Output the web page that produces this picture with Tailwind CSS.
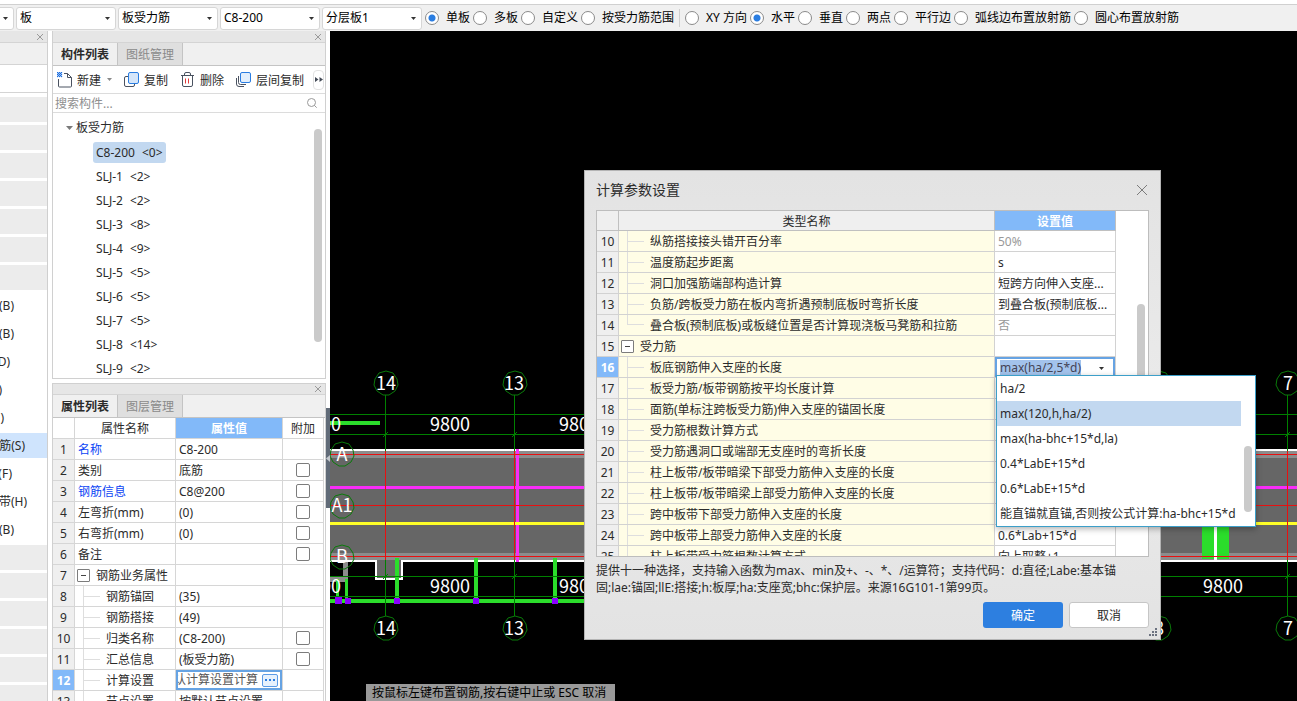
<!DOCTYPE html>
<html lang="zh-CN">
<head>
<meta charset="utf-8">
<title>计算参数设置</title>
<script src="https://cdn.jsdelivr.net/npm/@tailwindcss/browser@4"></script>
</head>
<body class="flex h-screen flex-col overflow-hidden bg-white font-['Noto_Sans','Noto_Sans_CJK_SC',sans-serif] text-xs leading-4 text-[#2b2b2b]">

<!-- Top toolbar -->
<header class="mt-1 flex h-[27px] shrink-0 items-center border-t border-[#d0d0d0] bg-[#f0f0f0]">
  <div id="combos" class="flex h-[23px] gap-[2px] -ml-[86px]"></div>
  <div class="ml-[3px] flex items-center text-black">
    <div id="scope" role="radiogroup" aria-label="布置范围" class="flex gap-[3px]"></div>
    <span class="mx-[5px] h-[18px] w-px bg-[#cfcfcf]"></span>
    <div id="direction" role="radiogroup" aria-label="布置方向" class="flex gap-[3px]"></div>
  </div>
</header>

<div class="flex min-h-0 flex-1">
  <!-- Navigation strip -->
  <nav class="flex w-12 shrink-0 flex-col overflow-hidden border-r border-[#cfcfcf]">
    <div class="flex h-3 shrink-0 items-center justify-end border-b border-[#d4d4d4] bg-[#e6e6e6] pr-[3px]">
      <button aria-label="关闭导航"><svg class="size-2" viewBox="0 0 8 8" fill="none" stroke="#9a9a9a"><path d="M1 1l6 6M7 1l-6 6"/></svg></button>
    </div>
    <div class="h-[22px] shrink-0 border-b border-[#d4d4d4] bg-[#f0f0f0]"></div>
    <div class="h-7 shrink-0 border-b border-[#d4d4d4]"></div>
    <div id="nav" class="mt-1 flex flex-col gap-[3px]"></div>
  </nav>

  <!-- Docked panels -->
  <aside class="ml-1 flex w-[274px] shrink-0 flex-col gap-1">
    <section class="flex h-[348px] shrink-0 flex-col border border-t-0 border-[#d0d0d0]">
      <div class="flex h-3 shrink-0 items-center justify-end border-b border-[#d4d4d4] bg-[#e6e6e6] pr-[3px]">
        <button aria-label="关闭"><svg class="size-2" viewBox="0 0 8 8" fill="none" stroke="#9a9a9a"><path d="M1 1l6 6M7 1l-6 6"/></svg></button>
      </div>
      <div class="flex h-[23px] shrink-0 border-b border-[#c4c4c4] bg-[#f0f0f0]">
        <button class="w-[65px] border-r border-[#c4c4c4] pt-[2px] font-bold">构件列表</button>
        <button class="w-[65px] border-r border-[#c4c4c4] bg-[#dfdfdf] pt-[2px] text-[#8a8a8a]">图纸管理</button>
      </div>
      <div class="flex h-7 shrink-0 items-center border-b border-[#dcdcdc] pl-1">
        <button class="flex items-center">
          <svg class="size-4" viewBox="0 0 16 16" fill="none"><path d="M7 1.500h3.500l4 4v8.500a1 1 0 0 1-1 1h-11a1 1 0 0 1-1-1V7M10.500 1.500v4h4" stroke="#4a5260"/><path d="M0 0h1v1H0zM2 0h1v1H2zM4 0h1v1H4zM1 1h1v1H1zM3 1h1v1H3zM0 2h1v1H0zM2 2h1v1H2zM4 2h1v1H4zM1 3h1v1H1zM3 3h1v1H3zM0 4h1v1H0zM2 4h1v1H2zM4 4h1v1H4z" fill="#1f6fe0" stroke="#1f6fe0" stroke-width=".3"/></svg>
          <span class="ml-1 pt-[2px]">新建</span>
          <svg class="ml-[6px] h-[3px] w-[5px]" viewBox="0 0 5 3"><path d="M0 0h5L2.500 3z" fill="#8a8a8a"/></svg>
        </button>
        <button class="ml-3 flex items-center">
          <svg class="size-4" viewBox="0 0 16 16" fill="none"><path d="M4 4.500H2a1.500 1.500 0 0 0-1.500 1.500v7A1.500 1.500 0 0 0 2 14.500h7a1.500 1.500 0 0 0 1.500-1.500v-1" stroke="#4a5260"/><rect x="4.500" y=".5" width="10" height="11" rx="1.500" fill="#d5e6fa" stroke="#2a7de1"/></svg>
          <span class="ml-1 pt-[2px]">复制</span>
        </button>
        <button class="ml-3 flex items-center">
          <svg class="size-4" viewBox="0 0 16 16" fill="none"><path d="M1 3.500h13M4.500 3.500V2a1.500 1.500 0 0 1 1.500-1.500h3A1.500 1.500 0 0 1 10.500 2v1.500M2.500 3.500V13A1.500 1.500 0 0 0 4 14.500h7a1.500 1.500 0 0 0 1.500-1.500V3.500" stroke="#4a5260"/><path d="M5.500 6.500v5M8.500 6.500v5" stroke="#e23b3b"/></svg>
          <span class="ml-1 pt-[2px]">删除</span>
        </button>
        <button class="ml-3 flex items-center">
          <svg class="size-4" viewBox="0 0 16 16" fill="none"><path d="M.5 6v6A2.500 2.500 0 0 0 3 14.500h5M2.500 4v6.500A2 2 0 0 0 4.500 12.500H10" stroke="#4a5260"/><rect x="4.500" y=".5" width="10" height="10" rx="1.500" fill="#e3effc" stroke="#2a7de1"/></svg>
          <span class="ml-1 pt-[2px]">层间复制</span>
        </button>
        <button aria-label="更多" class="ml-[9px] flex h-5 w-[11px] items-center justify-center rounded-sm border border-[#e2e2e2]">
          <svg class="h-[5px] w-2 shrink-0" viewBox="0 0 8 5"><path d="M0 0l3.500 2.500L0 5zM4.500 0L8 2.500 4.500 5z" fill="#444b57"/></svg>
        </button>
      </div>
      <label class="flex h-[19px] shrink-0 items-center border-b border-[#dcdcdc] pr-2 pl-[2px]">
        <input type="text" aria-label="搜索构件" placeholder="搜索构件..." class="min-w-0 flex-1 pt-[2px] outline-none placeholder:text-[#8f8f8f]">
        <svg class="size-[10px]" viewBox="0 0 10 10" fill="none" stroke="#999"><circle cx="4.500" cy="4.500" r="4"/><path d="M7.300 7.300L9.700 9.700"/></svg>
      </label>
      <div class="flex min-h-0 flex-1 justify-between overflow-hidden">
        <div class="pt-[3px] pl-[13px]">
          <div class="flex h-6 items-center gap-[3px]"><svg class="h-1 w-[7px]" viewBox="0 0 7 4"><path d="M0 0h7L3.500 4z" fill="#7a7a7a"/></svg>板受力筋</div>
          <ul id="tree" class="pl-[27px]"></ul>
        </div>
        <div class="mt-4 mr-[3px] h-[213px] w-2 rounded-full bg-[#cacaca]"></div>
      </div>
    </section>

    <section class="flex min-h-0 flex-1 flex-col overflow-hidden border border-b-0 border-[#d0d0d0]">
      <div class="flex h-[11px] shrink-0 items-center justify-end border-b border-[#d4d4d4] bg-[#e6e6e6] pr-[3px]">
        <button aria-label="关闭"><svg class="size-2" viewBox="0 0 8 8" fill="none" stroke="#9a9a9a"><path d="M1 1l6 6M7 1l-6 6"/></svg></button>
      </div>
      <div class="flex h-[23px] shrink-0 border-b border-[#c4c4c4] bg-[#f0f0f0]">
        <button class="w-[65px] border-r border-[#c4c4c4] pt-[2px] font-bold">属性列表</button>
        <button class="w-[65px] border-r border-[#c4c4c4] bg-[#dfdfdf] pt-[2px] text-[#8a8a8a]">图层管理</button>
      </div>
      <table class="w-[271px] shrink-0 table-fixed border-separate border-spacing-0">
        <colgroup><col class="w-[22px]"><col class="w-[101px]"><col class="w-[107px]"><col class="w-[41px]"></colgroup>
        <thead><tr class="h-[21px] leading-4 [&>th]:border-r [&>th]:border-b [&>th]:border-[#d6d6d6] [&>th]:p-0 [&>th]:pt-[2px] [&>th]:font-normal">
          <th></th><th>属性名称</th><th class="bg-[#82b9f9] text-white"><b>属性值</b></th><th>附加</th>
        </tr></thead>
        <tbody id="props"></tbody>
      </table>
    </section>
  </aside>

  <!-- Splitter -->
  <div class="flex w-1 shrink-0 flex-col">
    <button aria-label="折叠面板" class="mt-[377px] flex h-[100px] items-center bg-[#616b78]"><svg class="h-[7px] w-1" viewBox="0 0 4 7"><path d="M4 0v7L0 3.500z" fill="#c4c8ce"/></svg></button>
  </div>

  <!-- Drawing area -->
  <main class="relative min-w-0 flex-1 overflow-hidden bg-black">
    <svg class="absolute top-0 left-0 h-[670px] w-[967px] font-['Noto_Sans_CJK_SC',sans-serif]" viewBox="330 31 967 670" shape-rendering="crispEdges">
      <defs>
        <polygon id="bub" points="0,-12 7,-10 11,-4 12,2 9,8 3,12 -3,12 -9,8 -12,2 -11,-4 -7,-10" fill="none" stroke="#0a7a0a" shape-rendering="auto"/>
      </defs>
      <g fill="#666">
        <rect x="330" y="451" width="967" height="110"/>
        <rect x="376" y="561" width="26" height="17"/>
      </g>
      <g fill="#8c8c8c">
        <rect x="330" y="451" width="967" height="7"/>
        <rect x="330" y="553" width="967" height="7"/>
        <rect x="343" y="561" width="5" height="21"/>
        <rect x="330" y="577" width="14" height="5"/>
      </g>
      <path d="M330 450H1297M330 561H376V579H402V561H1297" fill="none" stroke="#fff" stroke-width="2"/>
      <g fill="#2bdd2b">
        <rect x="330" y="421" width="50" height="4"/>
        <rect x="330" y="599" width="254" height="4"/>
        <rect x="395" y="558" width="4" height="42"/>
        <rect x="474" y="558" width="4" height="42"/>
        <rect x="553" y="558" width="4" height="42"/>
        <rect x="336" y="579" width="3" height="20"/>
        <rect x="345" y="579" width="3" height="20"/>
        <rect x="1202" y="500" width="27" height="59"/>
      </g>
      <rect x="1214" y="500" width="3" height="60" fill="#fff"/>
      <path d="M385.500 395V616M514.500 395V616M1287.500 395V616M330 414.500H1297M330 434.500H1297M330 576.500H1297M330 596.500H1297" stroke="#008000" fill="none"/>
      <path d="M383 437l5-5M512 437l5-5M1285 437l5-5M383 579l5-5M512 579l5-5M1285 579l5-5" stroke="#008000"/>
      <g fill="#f92cf9"><rect x="330" y="486" width="967" height="3"/><rect x="516" y="449" width="3" height="113"/></g>
      <rect x="330" y="522" width="967" height="3" fill="#ffff28"/>
      <path d="M330 454.500H1297M330 505.500H1297M330 556.500H1297M385.500 451V560M514.500 451V560M1287.500 451V560" stroke="#e81010" fill="none"/>
      <g fill="#8b00ff"><rect x="335" y="597" width="7" height="7"/><rect x="345" y="598" width="6" height="6"/><rect x="394" y="598" width="6" height="6"/><rect x="473" y="598" width="6" height="6"/><rect x="552" y="598" width="6" height="6"/></g>
      <use href="#bub" x="386" y="383"/><use href="#bub" x="515" y="383"/><use href="#bub" x="1159" y="383"/><use href="#bub" x="1288" y="383"/>
      <use href="#bub" x="386" y="628"/><use href="#bub" x="515" y="628"/><use href="#bub" x="1159" y="628"/><use href="#bub" x="1288" y="628"/>
      <use href="#bub" x="342" y="454"/><use href="#bub" x="342" y="506"/><use href="#bub" x="342" y="557"/>
      <g fill="#fff" font-size="18" text-anchor="middle">
        <text x="386" y="390">14</text><text x="514" y="390">13</text><text x="1288" y="390">7</text>
        <text x="386" y="635">14</text><text x="514" y="635">13</text><text x="1159" y="635">8</text><text x="1288" y="635">7</text>
        <text x="342" y="461">A</text><text x="342" y="512">A1</text><text x="342" y="563">B</text>
        <text x="321" y="431">9800</text><text x="450" y="431">9800</text><text x="579" y="431">9800</text>
        <text x="321" y="593">9800</text><text x="450" y="593">9800</text><text x="579" y="593">9800</text><text x="1223" y="593">9800</text>
      </g>
    </svg>

    <div class="absolute top-[653px] left-9 bg-[#999] py-px pr-[9px] pl-[6px] whitespace-nowrap text-black">按鼠标左键布置钢筋,按右键中止或 ESC 取消</div>

    <!-- Dialog window -->
    <div role="dialog" aria-labelledby="dlg-title" class="absolute top-[139px] left-[254px] flex h-[470px] w-[577px] flex-col border border-[#b4b4b4] bg-[#e4e4e4] bg-linear-to-b from-[#e3e3e3] via-[#ebebeb] to-[#e3e3e3] px-[11px]">
      <div class="flex h-[39px] shrink-0 items-center justify-between pr-px pb-[2px]">
        <h1 id="dlg-title" class="text-sm leading-5">计算参数设置</h1>
        <button aria-label="关闭对话框"><svg class="size-3" viewBox="0 0 12 12" fill="none" stroke="#7c7c7c"><path d="M1 1l10 10M11 1L1 11"/></svg></button>
      </div>
      <div class="flex h-[347px] shrink-0 justify-between overflow-hidden border border-[#bdbdbd] bg-white">
        <table class="h-fit w-[519px] table-fixed border-separate border-spacing-0">
          <colgroup><col class="w-[22px]"><col class="w-[376px]"><col class="w-[121px]"></colgroup>
          <thead><tr class="h-5 bg-[#efefef] leading-4 [&>th]:border-r [&>th]:border-b [&>th]:border-[#c0c0c0] [&>th]:p-0 [&>th]:pt-[2px] [&>th]:font-normal">
            <th></th><th>类型名称</th><th class="bg-[#82b9f9] text-white"><b>设置值</b></th>
          </tr></thead>
          <tbody id="params"></tbody>
        </table>
        <div class="mt-[93px] mr-[3px] h-[186px] w-2 rounded-full bg-[#cacaca]"></div>
      </div>
      <p class="mt-[5px] leading-[17px]">提供十一种选择，支持输入函数为max、min及+、-、*、/运算符；支持代码：d:直径;Labe:基本锚<br>固;lae:锚固;llE:搭接;h:板厚;ha:支座宽;bhc:保护层。来源16G101-1第99页。</p>
      <div class="mt-[6px] flex justify-end gap-[6px]">
        <button class="h-[26px] w-20 rounded-[3px] bg-[#2d7fe0] pt-[2px] text-white">确定</button>
        <button class="h-[26px] w-20 rounded-[3px] border border-[#c6c6c6] bg-white pt-[2px]">取消</button>
      </div>
      <svg class="absolute right-[3px] bottom-[3px] size-2" viewBox="0 0 8 8" fill="#6c7280"><path d="M6 0h2v2H6zM6 3h2v2H6zM3 3h2v2H3zM6 6h2v2H6zM3 6h2v2H3zM0 6h2v2H0z"/></svg>

      <!-- Open drop-down of row 16 -->
      <div class="absolute top-[204px] left-[411px] flex w-[260px] justify-between border border-[#3c9fc9] bg-white shadow-[0_2px_6px_rgba(0,0,0,0.3)]">
        <ul id="options" role="listbox" aria-label="板底钢筋伸入支座的长度" class="w-[244px]"></ul>
        <div class="mt-[70px] mr-[3px] h-[66px] w-2 rounded-full bg-[#cacaca]"></div>
      </div>
    </div>
  </main>
</div>

<script>
const $ = id => document.getElementById(id);

$('combos').innerHTML = [['', '楼层'], ['板', '构件类别'], ['板受力筋', '构件类型'], ['C8-200', '构件'], ['分层板1', '分层']].map(([t, l]) => `
  <label class="relative flex">
    <select aria-label="${l}" class="w-[100px] appearance-none rounded-[3px] border border-[#d6d6d6] bg-white pl-[3px] text-black"><option>${t}</option></select>
    <svg class="pointer-events-none absolute top-[10px] right-[6px] h-[3px] w-[5px]" viewBox="0 0 5 3"><path d="M0 0h5L2.500 3z" fill="#333"/></svg>
  </label>`).join('');

const radios = (name, items, on) => items.map(t => `
  <label class="flex items-center gap-[7px] whitespace-nowrap">
    <input type="radio" name="${name}" ${t === on ? 'checked' : ''} class="size-[14px] appearance-none rounded-full border border-[#8a8a8a] bg-white checked:bg-[radial-gradient(circle,#2a7de1_3px,white_4px)]">${t}
  </label>`).join('');
$('scope').innerHTML = radios('scope', ['单板', '多板', '自定义', '按受力筋范围'], '单板');
$('direction').innerHTML = radios('direction', ['XY 方向', '水平', '垂直', '两点', '平行边', '弧线边布置放射筋', '圆心布置放射筋'], '水平');

const group = '<div class="h-[25px] shrink-0 bg-[#ececec]"></div>';
$('nav').innerHTML = group.repeat(7) +
  [['(B)', 14], ['(B)', 14], ['(D)', 10], [')', 2], [')', 4], ['筋(S)', 25], ['(F)', 12], ['带(H)', 27], ['(B)', 14]].map(([t, w]) => `
  <a href="#" class="${t === '筋(S)' ? 'bg-[#cfe4fd]' : ''} flex h-[25px] shrink-0 items-center"><span class="flex justify-end whitespace-nowrap" style="width:${w}px">${t}</span></a>`).join('') +
  group.repeat(6);

$('tree').innerHTML = [['C8-200', 0], ['SLJ-1', 2], ['SLJ-2', 2], ['SLJ-3', 8], ['SLJ-4', 9], ['SLJ-5', 5], ['SLJ-6', 5], ['SLJ-7', 5], ['SLJ-8', 14], ['SLJ-9', 2]].map(([t, n], i) => `
  <li class="flex h-6 items-center"><span class="${i ? '' : 'bg-[#c2d8f0]'} flex gap-[7px] rounded-[3px] px-[3px] pt-[3px] pb-[2px]"><span>${t}</span><span>&lt;${n}&gt;</span></span></li>`).join('');

const minus = '<button aria-label="折叠" class="mx-[2px] flex size-[13px] shrink-0 items-center justify-center rounded-[1px] border border-[#7c7c7c] bg-white"><span class="h-px w-[5px] bg-[#444]"></span></button>';
const branch = last => `<span class="ml-2 flex w-[17px] shrink-0 self-stretch border-[#dedede] ${last ? 'mb-[10px] border-b border-l' : 'items-center border-l'}">${last ? '' : '<span class="h-px w-full bg-[#dedede]"></span>'}</span>`;

/* [number, name, value, has checkbox, kind] */
$('props').innerHTML = [
  [1, '名称', 'C8-200', 0, 'link'], [2, '类别', '底筋', 1], [3, '钢筋信息', 'C8@200', 1, 'link'],
  [4, '左弯折(mm)', '(0)', 1], [5, '右弯折(mm)', '(0)', 1], [6, '备注', '', 1], [7, '钢筋业务属性', '', 0, 'group'],
  [8, '钢筋锚固', '(35)', 0, 'sub'], [9, '钢筋搭接', '(49)', 0, 'sub'], [10, '归类名称', '(C8-200)', 1, 'sub'],
  [11, '汇总信息', '(板受力筋)', 1, 'sub'], [12, '计算设置', '按默认计算设置计算', 0, 'sub'], [13, '节点设置', '按默认节点设置', 0, 'sub']
].map(([n, name, val, chk, kind]) => `
  <tr class="h-[21px] [&>*]:h-[21px] [&>*]:border-r [&>*]:border-b [&>*]:border-[#d6d6d6] [&>*]:p-0">
    <th class="${n === 12 ? 'bg-[#82b9f9] text-white' : 'bg-[#efefef] font-normal'}"><div class="pt-[2px]">${n}</div></th>
    <td><div class="flex h-5 items-center overflow-hidden whitespace-nowrap">${
      kind === 'group' ? minus + `<span class="ml-1 pt-[2px]">${name}</span>` :
      kind === 'sub' ? branch(false) + `<span class="ml-[6px] pt-[2px]">${name}</span>` :
      `<span class="${kind === 'link' ? 'text-[#0b45f5]' : ''} ml-[3px] pt-[2px]">${name}</span>`}</div></td>
    <td>${n === 12
      ? `<div class="flex h-5 items-center gap-1 border-2 border-[#66a3e3] pr-[2px]"><div class="flex min-w-0 flex-1 justify-end overflow-hidden whitespace-nowrap text-[#555]">${val}</div><button aria-label="设置" class="flex h-[13px] w-4 shrink-0 items-center justify-center gap-[2px] rounded-xs border border-[#5b9be6] bg-[#e6f1fd]"><span class="size-[2px] bg-[#2a7de1]"></span><span class="size-[2px] bg-[#2a7de1]"></span><span class="size-[2px] bg-[#2a7de1]"></span></button></div>`
      : `<div class="h-5 overflow-hidden pt-px pl-[3px] leading-5 whitespace-nowrap">${val}</div>`}</td>
    <td><div class="flex items-center justify-center">${chk ? `<input type="checkbox" aria-label="附加 ${name}" class="size-[14px] appearance-none rounded-[2px] border border-[#7c7c7c] bg-white">` : ''}</div></td>
  </tr>`).join('');

$('params').innerHTML = [
  [10, '纵筋搭接接头错开百分率', '50%'], [11, '温度筋起步距离', 's'], [12, '洞口加强筋端部构造计算', '短跨方向伸入支座...'],
  [13, '负筋/跨板受力筋在板内弯折遇预制底板时弯折长度', '到叠合板(预制底板...'], [14, '叠合板(预制底板)或板缝位置是否计算现浇板马凳筋和拉筋', '否'],
  [15, '受力筋', ''], [16, '板底钢筋伸入支座的长度', 'max(ha/2,5*d)'], [17, '板受力筋/板带钢筋按平均长度计算', ''],
  [18, '面筋(单标注跨板受力筋)伸入支座的锚固长度', ''], [19, '受力筋根数计算方式', ''], [20, '受力筋遇洞口或端部无支座时的弯折长度', ''],
  [21, '柱上板带/板带暗梁下部受力筋伸入支座的长度', ''], [22, '柱上板带/板带暗梁上部受力筋伸入支座的长度', ''],
  [23, '跨中板带下部受力筋伸入支座的长度', ''], [24, '跨中板带上部受力筋伸入支座的长度', '0.6*Lab+15*d'], [25, '柱上板带受力筋根数计算方式', '向上取整+1']
].map(([n, name, val]) => `
  <tr class="h-[21px] [&>*]:h-[21px] [&>*]:border-r [&>*]:border-b [&>*]:border-[#d2d2d2] [&>*]:p-0">
    <th class="${n === 16 ? 'bg-[#82b9f9] text-white' : 'bg-[#efefef] font-normal'}"><div class="pt-[2px]">${n}</div></th>
    <td class="bg-[#fffde6]"><div class="flex h-5 items-center overflow-hidden whitespace-nowrap">${
      n === 15 ? minus + `<span class="ml-1 pt-[2px]">${name}</span>` : branch(n === 14) + `<span class="ml-[6px] pt-[2px]">${name}</span>`}</div></td>
    <td>${n === 16
      ? `<div class="flex h-5 items-center justify-between border-2 border-b-0 border-[#66a3e3] pr-[9px] pl-[3px]"><span class="bg-[#a3c3ec] text-[#445]">${val}</span><svg class="h-[3px] w-[5px]" viewBox="0 0 5 3"><path d="M0 0h5L2.500 3z" fill="#333"/></svg></div>`
      : `<div class="${n === 10 || n === 14 ? 'text-[#999]' : ''} h-5 overflow-hidden pt-px pl-[3px] leading-5 whitespace-nowrap">${val}</div>`}</td>
  </tr>`).join('');

$('options').innerHTML = ['ha/2', 'max(120,h,ha/2)', 'max(ha-bhc+15*d,la)', '0.4*LabE+15*d', '0.6*LabE+15*d', '能直锚就直锚,否则按公式计算:ha-bhc+15*d'].map((t, i) => `
  <li role="option" aria-selected="${i === 1}" class="${i === 1 ? 'bg-[#c2d8f0]' : ''} flex h-[25px] items-center pl-[3px] whitespace-nowrap">${t}</li>`).join('');
</script>
</body>
</html>
